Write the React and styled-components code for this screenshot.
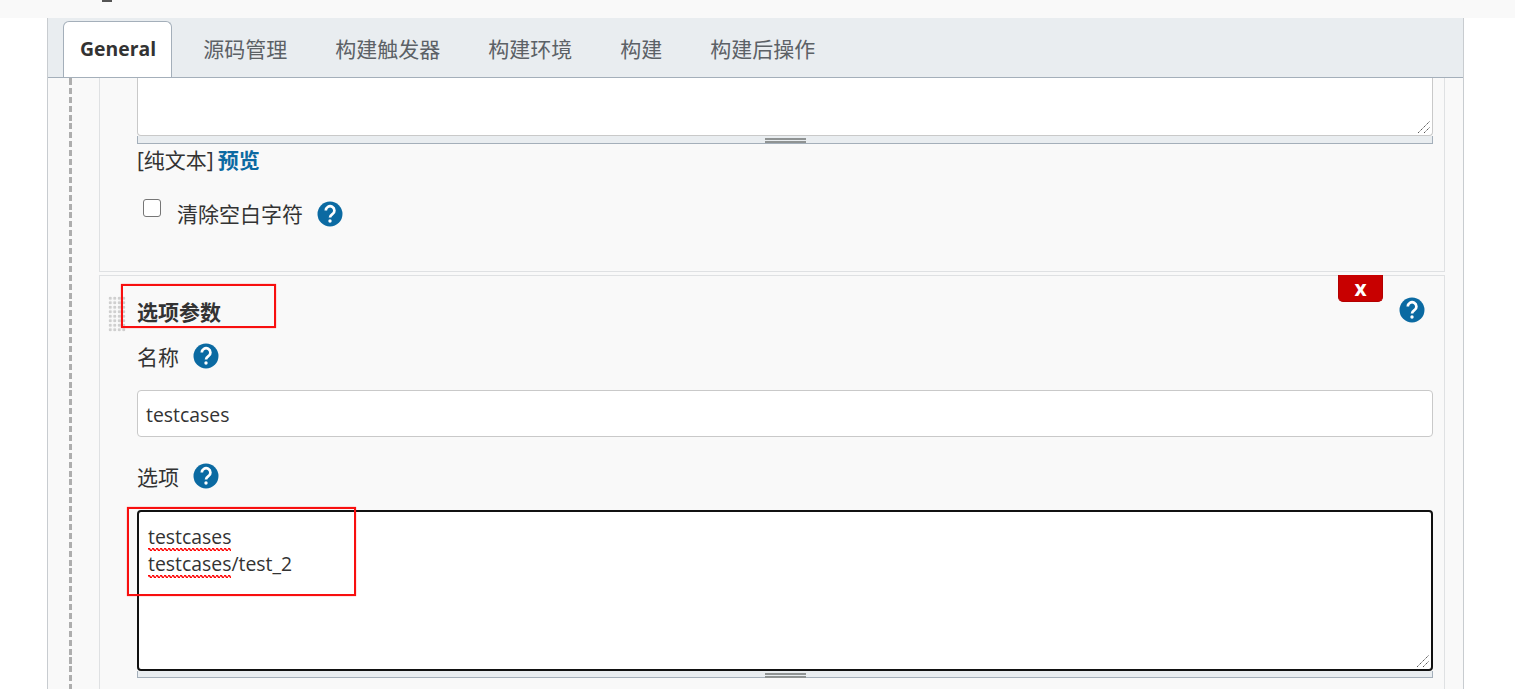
import React from "react";
import styled, { createGlobalStyle } from "styled-components";

const FONT = `"Open Sans", "Noto Sans CJK SC", sans-serif`;
const CJK_SIZE = "21px";
const LATIN_SIZE = "19.4px";
const WAVE = encodeURIComponent(
  `<svg xmlns="http://www.w3.org/2000/svg" width="4" height="3"><path d="M0 1.5 Q1 -0.5 2 1.5 T4 1.5" fill="none" stroke="#f00" stroke-width="1.5"/></svg>`
);

const Global = createGlobalStyle`
  html, body { margin: 0; padding: 0; background: #fff; height: 689px; overflow: hidden; }
  body { font-family: ${FONT}; font-size: ${CJK_SIZE}; color: #333; }
  * { box-sizing: border-box; }
`;

const Page = styled.div`height: 689px; overflow: hidden; display: flex; flex-direction: column;`;
const TopStrip = styled.div`height: 18px; background: #f9f9f9; padding-left: 102px; flex: none;`;
const Clipped = styled.div`width: 10px; height: 2px; background: #555;`;
const Panel = styled.div`
  width: 1417px; margin-left: 47px; flex: 1; background: #f9f9f9;
  border-left: 1px solid #c8ccd0; border-right: 1px solid #c8ccd0;
  display: flex; flex-direction: column; min-height: 0;
`;
const TabBar = styled.div`
  height: 60px; flex: none; background: #e9edf0; border-bottom: 1px solid #a4afba;
  display: flex; align-items: flex-end; padding-left: 15px;
`;
const Tab = styled.div`
  height: 55px; padding: 0 24px 4px;
  display: flex; align-items: center; justify-content: center;
  font-size: ${CJK_SIZE}; color: #5c6166;
`;
const ActiveTab = styled.div`
  height: 56px; padding: 0 15px 2px 16px; margin-right: 7px;
  display: flex; align-items: center; justify-content: center;
  font-size: ${LATIN_SIZE}; font-weight: 700; color: #333;
  background: #fff; border: 1px solid #a4afba; border-bottom: none;
  border-radius: 6px 6px 0 0;
`;
const Body = styled.div`flex: 1; display: flex; min-height: 0; overflow: hidden;`;
const Rail = styled.div`
  margin-left: 21px; width: 3px; flex: none;
  background: repeating-linear-gradient(to bottom, #aeaeae 0 6px, transparent 6px 8.9px);
  background-position: 0 1px;
`;
const Column = styled.div`
  margin-left: 27px; width: 1346px; flex: none; display: flex; flex-direction: column; gap: 3px;
`;
const Section = styled.section`
  position: relative;
  border: 1px solid #dfe1e3;
  border-top: ${p => (p.$clip ? "none" : "1px solid #dfe1e3")};
  padding: 0 11px 0 37px;
  height: ${p => p.$h};
  flex: none;
`;
const PlainArea = styled.div`
  position: relative; background: #fff; height: 58px;
  border: 1px solid #c9c9c9; border-top: none; border-radius: 0 0 4px 4px;
`;
const FocusArea = styled.div`
  position: relative; background: #fff; height: 161px;
  border: 2px solid #111; border-radius: 4px; padding: 11px 9px;
  font-size: ${LATIN_SIZE}; line-height: 27px; color: #333;
`;
const Corner = styled.svg`
  position: absolute; right: 1px; bottom: 1px; width: 14px; height: 14px;
`;
const Grippie = styled.div`
  height: ${p => p.$h}; background: #e9edf0;
  border: 1px solid #a4afba; border-top: none; padding-top: 2px;
  display: flex; flex-direction: column; align-items: center; gap: 1px;
`;
const GripLine = styled.div`width: 41px; height: 2px; flex: none; background: #8f9393;`;
const Markup = styled.div`
  margin-top: 3px; height: 27px; line-height: 27px; display: flex; gap: 4px; color: #333;
`;
const Link = styled.a`color: #0b6aa2; font-weight: 700;`;
const CheckRow = styled.div`margin-top: 25px; margin-left: 6px; height: 30px; display: flex; align-items: flex-start;`;
const Check = styled.span`
  width: 18px; height: 18px; border: 1px solid #767676; border-radius: 3px; background: #fff; flex: none;
`;
const CheckLabel = styled.span`margin-left: 16px; margin-top: 2px; line-height: 27px;`;
const HelpSvg = styled.svg`
  display: block; flex: none; width: 26px; height: 26px;
  margin-left: ${p => p.$ml || "14px"}; margin-top: ${p => p.$mt || "0"};
`;
const Head = styled.div`
  height: 47px; margin-top: 20px; display: flex; align-items: flex-start; justify-content: space-between;
  padding-right: 8px;
`;
const Title = styled.strong`font-weight: 700; line-height: 30px; margin-top: 1px; color: #333;`;
const Label = styled.div`display: flex; align-items: center; height: 26px; margin-bottom: 21px;`;
const Input = styled.div`
  height: 47px; background: #fff; border: 1px solid #c9c9c9; border-radius: 4px; padding: 1px 8px 0;
  display: flex; align-items: center; font-size: ${LATIN_SIZE}; color: #333; margin-bottom: 26px;
`;
const Squiggle = styled.span`
  padding-bottom: 1px;
  background: url("data:image/svg+xml,${WAVE}") repeat-x left bottom;
`;
const Line = styled.div`white-space: nowrap;`;
const DeleteFlag = styled.div`
  position: absolute; top: -1px; left: 1238px; width: 45px; height: 27px;
  background: #c80000; border: 1px solid #b30000; border-top: none; border-radius: 0 0 5px 5px;
  color: #fff; font-weight: 700; font-size: 21px; line-height: 26px; text-align: center;
`;
const Dots = styled.div`
  position: absolute; left: 8px; top: 20px; width: 18px; height: 36px;
  background-image: radial-gradient(circle, #cfcfcf 1.3px, transparent 1.9px);
  background-size: 4.5px 4.5px;
`;
const RedMark = styled.div`
  position: absolute; left: ${p => p.$x}px; top: ${p => p.$y}px; width: ${p => p.$w}px; height: ${p => p.$h}px;
  border: 2px solid #f80f0f; box-shadow: 0 0 1px rgba(255, 0, 0, 0.6); pointer-events: none;
`;

const Help = ({ ml, mt }) => (
  <HelpSvg viewBox="0 0 26 26" $ml={ml} $mt={mt}>
    <circle cx="13" cy="13" r="12.5" fill="#0b6aa2" />
    <path d="M8.8 9.6 a4.3 4.3 0 1 1 6.6 3.6 c-1.5 1 -2.4 1.6 -2.4 3.4" fill="none" stroke="#fff" strokeWidth="2.7" />
    <circle cx="13" cy="20" r="1.7" fill="#fff" />
  </HelpSvg>
);

const ResizeCorner = () => (
  <Corner viewBox="0 0 14 14">
    <path d="M1 13 L13 1 M7 13 L13 7" stroke="#555" strokeWidth="1" strokeDasharray="1.4 0.7" fill="none" />
  </Corner>
);

const TABS = ["源码管理", "构建触发器", "构建环境", "构建", "构建后操作"];

export default function App() {
  return (
    <Page>
      <Global />
      <TopStrip><Clipped /></TopStrip>
      <Panel>
        <TabBar>
          <ActiveTab>General</ActiveTab>
          {TABS.map(t => <Tab key={t}>{t}</Tab>)}
        </TabBar>
        <Body>
          <Rail />
          <Column>
            <Section $clip $h="194px">
              <PlainArea><ResizeCorner /></PlainArea>
              <Grippie $h="8px"><GripLine /><GripLine /></Grippie>
              <Markup>[纯文本] <Link>预览</Link></Markup>
              <CheckRow>
                <Check />
                <CheckLabel>清除空白字符</CheckLabel>
                <Help mt="2px" />
              </CheckRow>
            </Section>
            <Section $h="420px">
              <Dots />
              <DeleteFlag>x</DeleteFlag>
              <Head>
                <Title>选项参数</Title>
                <Help mt="1px" />
              </Head>
              <Label>名称<Help /></Label>
              <Input>testcases</Input>
              <Label>选项<Help /></Label>
              <FocusArea>
                <Line><Squiggle>testcases</Squiggle></Line>
                <Line><Squiggle>testcases</Squiggle>/test_2</Line>
                <ResizeCorner />
              </FocusArea>
              <Grippie $h="7px"><GripLine /><GripLine /></Grippie>
            </Section>
          </Column>
        </Body>
      </Panel>
      <RedMark $x={121} $y={284} $w={155} $h={44} />
      <RedMark $x={127} $y={507} $w={229} $h={89} />
    </Page>
  );
}
